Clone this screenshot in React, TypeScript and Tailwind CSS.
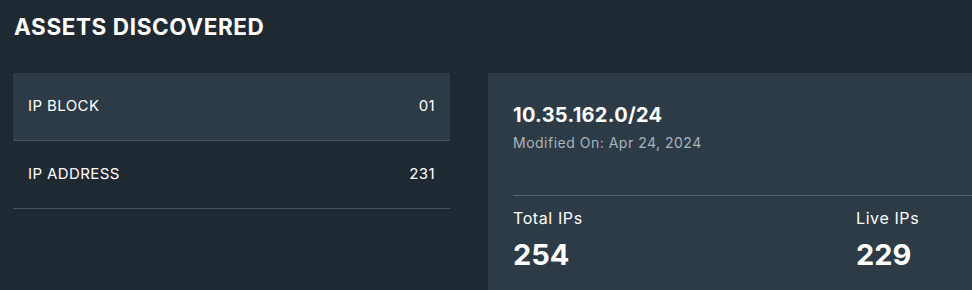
const ROWS = [
  { label: "IP BLOCK", value: "01", active: true },
  { label: "IP ADDRESS", value: "231", active: false },
];

const STATS = [
  { label: "Total IPs", value: "254" },
  { label: "Live IPs", value: "229" },
];

export default function App() {
  return (
    <div
      className="h-[290px] w-[972px] overflow-hidden bg-[#1f2932] text-white"
      style={{ fontFamily: "Inter, 'Noto Sans', sans-serif" }}
    >
      <h1 className="px-[14px] pt-[13px] text-[22.5px] font-bold leading-[28px] tracking-[0.6px]">ASSETS DISCOVERED</h1>

      <div className="mt-[32px] flex items-start">
        {/* left list */}
        <div className="ml-[13px] w-[437px] shrink-0">
          {ROWS.map((r) => (
            <div
              key={r.label}
              className={`flex h-[68px] items-center justify-between border-b border-[#46535d] px-[15px] text-[15px] tracking-[0.4px] ${
                r.active ? "bg-[#2c3b46]" : ""
              }`}
            >
              <span>{r.label}</span>
              <span>{r.value}</span>
            </div>
          ))}
        </div>

        {/* detail card */}
        <div className="ml-[38px] h-[240px] flex-1 bg-[#2c3b46] pl-[25px] pt-[27px]">
          <div className="text-[20px] font-bold leading-[30px] tracking-[0.3px]">10.35.162.0/24</div>
          <div className="mt-[4px] text-[14px] leading-[18px] tracking-[0.5px] text-[#aab4bc]">
            Modified On: Apr 24, 2024
          </div>
          <div className="mt-[43px] border-t border-[#56626c]" />
          <div className="mt-[11px] flex">
            {STATS.map((s) => (
              <div key={s.label} className="w-[343px]">
                <div className="text-[16px] leading-[22px] tracking-[0.6px]">{s.label}</div>
                <div className="mt-[8px] text-[29px] font-bold leading-[36px]">{s.value}</div>
              </div>
            ))}
          </div>
        </div>
      </div>
    </div>
  );
}
